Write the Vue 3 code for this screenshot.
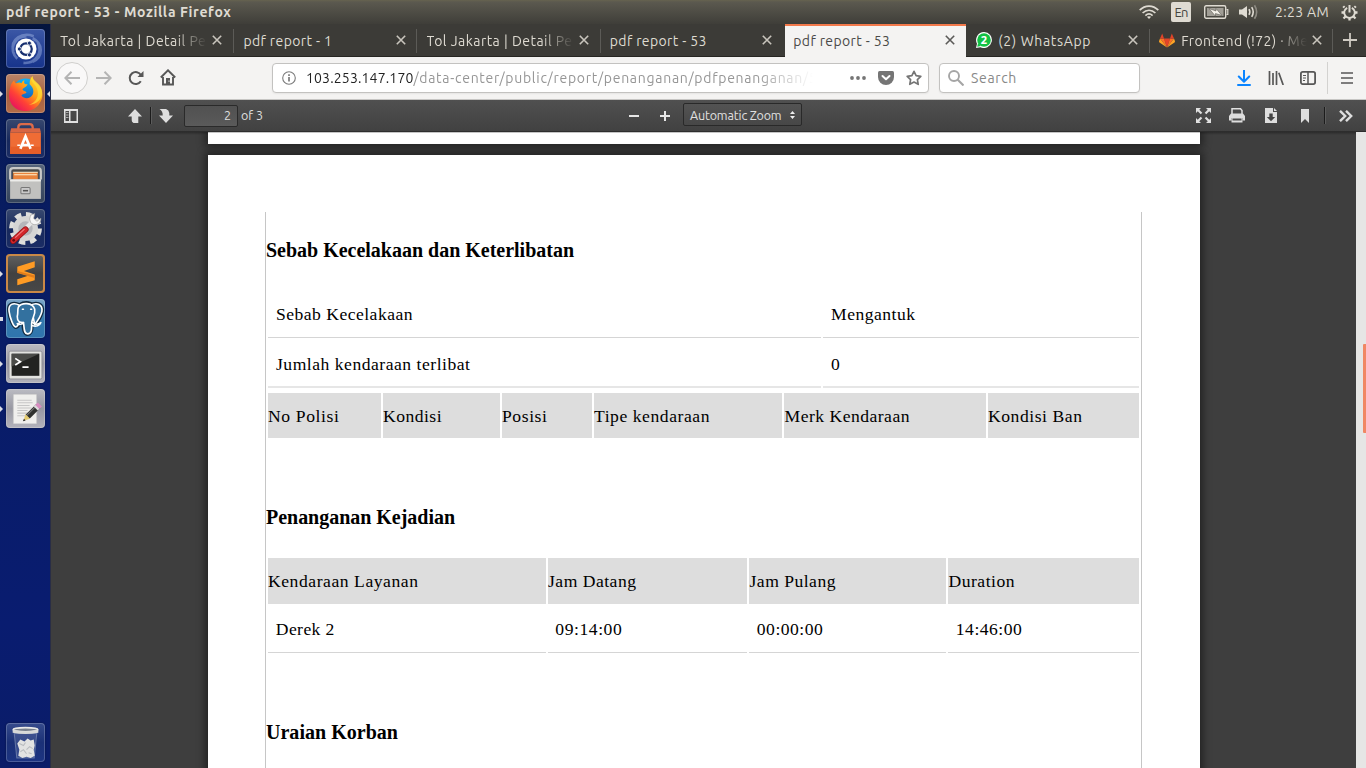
<script setup>
const vFit = {
  mounted(el, { value }) {
    const natural = el.getBoundingClientRect().width
    el.style.letterSpacing = (value - natural) / el.textContent.length + 'px'
  },
}

const tabs = [
  { title: 'Tol Jakarta | Detail Pe', width: 146, fade: true },
  { title: 'pdf report - 1', width: 89 },
  { title: 'Tol Jakarta | Detail Pe', width: 146, fade: true },
  { title: 'pdf report - 53', width: 97 },
  { title: 'pdf report - 53', width: 97, active: true },
  { title: '(2) WhatsApp', width: 93, icon: 'whatsapp' },
  { title: 'Frontend (!72) · Me', width: 127, icon: 'gitlab', fade: true },
]

const causes = [
  [{ t: 'Sebab Kecelakaan', w: 137 }, { t: 'Mengantuk', w: 84.5 }],
  [{ t: 'Jumlah kendaraan terlibat', w: 194.5 }, { t: '0', w: 9 }],
]
const vehicleHead = [
  { t: 'No Polisi', w: 71.5 },
  { t: 'Kondisi', w: 59 },
  { t: 'Posisi', w: 45.5 },
  { t: 'Tipe kendaraan', w: 116 },
  { t: 'Merk Kendaraan', w: 125.5 },
  { t: 'Kondisi Ban', w: 94.5 },
]
const handlingHead = [
  { t: 'Kendaraan Layanan', w: 150.5 },
  { t: 'Jam Datang', w: 88.5 },
  { t: 'Jam Pulang', w: 86.5 },
  { t: 'Duration', w: 66.5 },
]
const handlingRow = [
  { t: 'Derek 2', w: 59 },
  { t: '09:14:00', w: 67 },
  { t: '00:00:00', w: 66.5 },
  { t: '14:46:00', w: 66.5 },
]
</script>

<template>
  <div class="screen">
    <header class="menubar">
      <span v-fit="225.500" class="win-title">pdf report - 53 - Mozilla Firefox</span>
      <div class="indicators">
        <svg class="wifi" width="20" height="14" viewBox="0 0 20 14" fill="none" stroke="#dfdbd2" stroke-width="1.7">
          <path d="M.7 5.2C6-.2 14-.2 19.3 5.2M3.6 8C7.4 4.300 12.600 4.300 16.400 8M6.400 10.600c2.200-2 5-2 7.200 0" />
          <path d="M7.900 11.800 10 14l2.100-2.200Q10 10.500 7.900 11.800z" fill="#dfdbd2" stroke="none" />
        </svg>
        <span class="lang"><span v-fit="13">En</span></span>
        <svg class="battery" width="25" height="14" viewBox="0 0 25 14">
          <rect x=".7" y=".7" width="21" height="12.600" rx="1.500" fill="none" stroke="#dfdbd2" stroke-width="1.400" />
          <path d="M22.500 4.500h1.300v5h-1.300" fill="none" stroke="#dfdbd2" stroke-width="1.200" />
          <rect x="3" y="3" width="16.500" height="8" fill="#a19e96" />
          <path d="m5 3.500 7 2.500V3.500l6 7-6.500-2v2.700z" fill="#f3f0e8" stroke="#4a4943" stroke-width=".5" />
        </svg>
        <svg class="volume" width="20" height="16" viewBox="0 0 20 16" fill="none" stroke="#dfdbd2" stroke-width="1.600">
          <path d="M0 5.500h3L8 2v12l-5-3.500H0z" fill="#dfdbd2" stroke="none" />
          <path d="M10 5.200q1.700 2.800 0 5.600M12.700 3.200q3 4.800 0 9.600" />
          <path d="M15.500 1.300q4.300 6.700 0 13.400" stroke="#8d8a82" />
        </svg>
        <span v-fit="54" class="clock">2:23 AM</span>
        <svg class="cog" width="17" height="17" viewBox="-8.500 -8.500 17 17" fill="none" stroke="#dfdbd2">
          <path d="M-2.300-4.700A5.300 5.300 0 1 0 2.300-4.700" stroke-width="1.900" />
          <path d="M0-7.500V0" stroke-width="2" />
          <path d="M5-5l1.300-1.300M-5-5l-1.300-1.300M5.500 0H8M-5.500 0H-8M4 4l2 2M-4 4l-2 2M0 5.500V8" stroke-width="2.300" />
        </svg>
      </div>
    </header>

    <div class="desktop">
      <nav class="launcher">
        <div class="tile dash">
          <svg viewBox="0 0 38 38">
            <g fill="none" stroke="#b5c7ef" stroke-opacity=".4" stroke-width="2.500">
              <path d="M7 22C4 9 16 3 27 7M31 13c5 10-2 21-14 20M11 29C2 20 8 7 20 7M26 9c10 5 11 18 0 23" />
            </g>
            <circle cx="19.500" cy="19.500" r="10.200" fill="#fff" />
            <circle cx="19.500" cy="19.500" r="5.600" fill="none" stroke="#183070" stroke-width="2.200" />
            <g fill="#183070" stroke="#fff" stroke-width=".8">
              <circle cx="13" cy="19.500" r="2" /><circle cx="22.800" cy="13.800" r="2" /><circle cx="22.800" cy="25.200" r="2" />
            </g>
          </svg>
        </div>
        <div class="tile firefox">
          <i class="run" /><i class="focus" />
          <svg viewBox="0 0 38 38">
            <defs>
              <linearGradient id="fx" x1=".85" y1=".1" x2=".15" y2=".9"><stop offset="0" stop-color="#ffe12e" /><stop offset=".4" stop-color="#ff9a14" /><stop offset=".7" stop-color="#ff4236" /><stop offset="1" stop-color="#e9155c" /></linearGradient>
              <linearGradient id="globe" x2="0" y2="1"><stop offset="0" stop-color="#12b2f5" /><stop offset="1" stop-color="#174daf" /></linearGradient>
            </defs>
            <circle cx="19" cy="17" r="12.500" fill="url(#globe)" />
            <path d="M5 10c1-2 2-3 3-4 0 2 1 3 2 3 2-1 4-1 5 0 1-2 2-3 3-3-1 3 0 4 3 4-1 3-4 3-5 5 1 2 3 1 4 3-2 2-4 1-5 3 3 4 9 3 11-1 2-5-1-8-3-10 0-4 1-6 3-8 0 4 3 6 6 9 5 6 4 13 1 17-4 7-10 8-15 8C9 36 3 29 3 21c0-4 1-8 2-11z" fill="url(#fx)" />
            <path d="M24 3c0 6 6 7 7 14 1 7-4 12-9 13 8 0 14-6 13-14C34 10 28 7 24 3z" fill="#ffdb38" fill-opacity=".7" />
          </svg>
        </div>
        <div class="tile plain">
          <svg viewBox="0 0 38 38">
            <path d="M12 12V8q0-3 3-3h8q3 0 3 3v4" fill="none" stroke="#dd6b49" stroke-width="2.300" />
            <path d="M5 9h28l1 4H4z" fill="#d86543" />
            <path d="M4 13h30v21H4z" fill="#ef6c35" /><path d="M4 27h30v7H4z" fill="#e65e28" />
            <path d="m14 29 5-12 5 12M14.500 25.500h9" fill="none" stroke="#fff" stroke-width="2.600" />
            <path d="M11 25.500h3m10 0h3" stroke="#fff" stroke-width="1.500" />
          </svg>
        </div>
        <div class="tile slate">
          <svg viewBox="0 0 38 38">
            <path d="M6 5h26v12H6z" fill="#4d4b48" /><path d="M7 8h24v8H7z" fill="#e9843d" /><path d="M7 8h24M8 10.500h22" stroke="#fff0cf" stroke-width="1" />
            <path d="M4 15V7q0-3 3-3h24q3 0 3 3v8" fill="none" stroke="#c9c9c7" stroke-width="2" />
            <path d="M4 15h30v19H4z" fill="#c1c1bf" /><path d="M4 15h30v2H4z" fill="#ececea" />
            <rect x="14.500" y="23" width="9" height="6" rx="1" fill="#c9c9c9" stroke="#777" /><path d="M16.500 26h5" stroke="#555" stroke-width="1.500" />
          </svg>
        </div>
        <div class="tile plain">
          <svg viewBox="0 0 38 38">
            <circle cx="19" cy="19" r="13.500" fill="none" stroke="#dededc" stroke-width="5" stroke-dasharray="6.100 4.503" />
            <circle cx="19" cy="19" r="12.200" fill="#d5d5d4" /><circle cx="19" cy="19" r="7" fill="#b5b6ba" />
            <path d="m17 21 9-9" stroke="#e6e6e6" stroke-width="4" />
            <path d="M24 6q-2 4 0 7t6 2q4-1 4-6l-4 3-3-3 1-4.500z" fill="#f6f6f6" stroke="#999" stroke-width=".6" />
            <path d="M7 31 19 20" stroke="#8d1115" stroke-width="6" stroke-linecap="round" /><path d="M7 31 19 20" stroke="#d3262a" stroke-width="4.600" stroke-linecap="round" />
            <path d="m9 28 9-8.500" stroke="#f18483" stroke-width="1" /><circle cx="7.500" cy="30.500" r="1.300" fill="#64090c" />
          </svg>
        </div>
        <div class="tile sublime">
          <i class="run" />
          <svg viewBox="0 0 38 38">
            <path d="M11 14.500 28 9v6l-10.500 3.500L28 22v5.500L11 32.500v-6l10.500-3.300L11 20z" fill="#ff9b24" transform="translate(0 -2)" />
            <path d="m11 18.500 17 4.500v2.500l-17-5z" fill="#e07d1b" transform="translate(0 -2)" />
          </svg>
        </div>
        <div class="tile postgres">
          <i class="run dot" />
          <svg viewBox="0 0 38 38" stroke-linejoin="round" stroke-linecap="round">
            <g stroke="#122b40" stroke-width="4" fill="none"><path d="M13 6C7 3 2 5 3 12c1 7 4 14 6 15 3 1 4-4 5-6" /><path d="M24 6c6-3 12-1 11 6-1 5-4 9-6 12" /><path d="M13 6c7-4 15-2 16 6 0 6-4 10-4 14s-1 8-4 8-4-5-4-11" /></g>
            <g fill="#33719f" stroke="#fff" stroke-width="1.600">
              <path d="M13 6C7 3 2 5 3 12c1 7 4 14 6 15 2 1 4-4 5-6z" /><path d="M24 6c6-3 12-1 11 6-1 5-4 9-7 13z" />
              <path d="M12 8c3-5 14-5 16 2 1 6-3 9-3 14 0 6 0 10-4 10s-3-6-4-11c-5 0-6-2-6-6 1-4 0-6 1-9z" />
              <path d="M26 23c2 2 5 2 8 0-1 3-5 4-8 3M17 23c-1 2-5 2-6 1" fill="none" />
            </g>
            <path d="M16 10h1M24 10h1" stroke="#fff" stroke-width="1.500" />
          </svg>
        </div>
        <div class="tile grey">
          <i class="run" />
          <svg viewBox="0 0 38 38">
            <rect x="3" y="7" width="32" height="27" rx="1.500" fill="#e3e3e0" stroke="#85868b" stroke-width=".7" />
            <rect x="5.500" y="9.500" width="27" height="21.500" fill="#222321" /><path d="M5.500 9.500h27L5.500 22z" fill="#4a4b48" />
            <path d="m9 14 5 3.200-5 3.200M16 22.500h6" fill="none" stroke="#fff" stroke-width="1.700" />
          </svg>
        </div>
        <div class="tile grey">
          <i class="run" />
          <svg viewBox="0 0 38 38">
            <path d="M7 5h23v29H7z" fill="#f0efed" stroke="#b4b4b7" stroke-width=".6" />
            <path d="M11 11h14M11 13.500h15M11 16h12M11 18.500h14M11 21h10M11 23.500h11M11 26h8" stroke="#c6c6c6" stroke-width="1" />
            <path d="m21 27 10.500-10.500" stroke="#30312f" stroke-width="5.500" /><path d="m20 26 10.500-10.500" stroke="#777" stroke-width="1" />
            <path d="m30 18 3-3" stroke="#d98dc0" stroke-width="5.500" /><path d="m29 19 1.500-1.500" stroke="#ddd" stroke-width="5.500" />
            <path d="m17 31 2-6.500 4.500 4.500z" fill="#e4cb70" /><path d="m16.500 31.500 1-2.500 1.600 1.600z" fill="#222" />
          </svg>
        </div>
        <div class="tile trash">
          <svg viewBox="0 0 38 38">
            <path d="M8 10h22l-2.500 24h-17z" fill="#7483b2" fill-opacity=".3" stroke="#9eabc8" stroke-opacity=".5" />
            <path d="m11 20 3-4 4 2 3-3 3 2 3-1 1 6-1 4 1 6-4 2-4-1-4 1-4-2 1-6z" fill="#e2e3e2" />
            <path d="m13 20 4 2 2-3M20 26l3-3 3 2M14 28l3-2 3 4M22 29l3 1" fill="none" stroke="#b9bcbf" stroke-width="1" />
            <ellipse cx="19" cy="6.500" rx="12" ry="2" fill="#777f8c" stroke="#e8e9e8" stroke-width="1.600" />
            <path d="M6.500 6.500v3q12.500 2.500 25 0v-3q-12.500 3-25 0z" fill="#d7d9d8" />
          </svg>
        </div>
      </nav>

      <main class="browser">
        <div class="tabs">
          <div v-for="(tab, i) in tabs" :key="i" class="tab" :class="{ active: tab.active, nosep: i === 3 || i === 4 }">
            <svg v-if="tab.icon === 'whatsapp'" class="fav" width="16" height="16" viewBox="0 0 16 16">
              <path d="M8 0a8 8 0 1 1-3.600 15.200L0 16l1-4.200A8 8 0 0 1 8 0z" fill="#fff" /><circle cx="8" cy="8" r="6.800" fill="#12c143" /><path d="m1.200 14.800.9-3.500 2.800 2.600z" fill="#12c143" />
              <text x="8" y="12" text-anchor="middle" class="badge">2</text>
            </svg>
            <svg v-if="tab.icon === 'gitlab'" class="fav" width="16" height="15" viewBox="0 0 16 15">
              <path d="m8 14.500 3-9H5z" fill="#e24329" /><path d="M8 14.500 5 5.500H1z" fill="#fc6d26" /><path d="m8 14.500 3-9h4z" fill="#fc6d26" />
              <path d="M1 5.500 0 8.300q0 .8.500 1.200L8 14.500zM15 5.500l1 2.800q0 .8-.5 1.200L8 14.500z" fill="#fca326" /><path d="M1 5.500h4L3.200.5zM15 5.500h-4l1.800-5z" fill="#e24329" />
            </svg>
            <div class="tab-label" :class="{ fade: tab.fade }"><span v-fit="tab.width">{{ tab.title }}</span></div>
            <svg class="close" width="10" height="10" viewBox="0 0 10 10"><path d="m.8.8 8.400 8.400m0-8.400L.8 9.200" stroke="currentColor" stroke-width="1.600" /></svg>
          </div>
          <svg class="newtab" width="14" height="14" viewBox="0 0 14 14"><path d="M7 0v14M0 7h14" stroke="#cfcbc3" stroke-width="1.800" /></svg>
        </div>

        <div class="navbar">
          <button class="nb back"><svg width="16" height="14" viewBox="0 0 16 14"><path d="M16 7H1.500M7.500.8 1.300 7l6.200 6.200" /></svg></button>
          <button class="nb fwd"><svg width="16" height="14" viewBox="0 0 16 14"><path d="M0 7h14.500M8.500.8 14.700 7l-6.200 6.200" /></svg></button>
          <button class="nb"><svg width="16" height="16" viewBox="0 0 16 16"><path d="M12.800 11.300A6 6 0 1 1 13 5.200" stroke-width="2" /><path d="M15.500 1v6h-6z" fill="#575757" stroke="none" /></svg></button>
          <button class="nb"><svg width="16" height="17" viewBox="0 0 16 17"><path d="M.8 8.500 8 1.300l7.200 7.200" stroke-width="1.900" /><path d="M3 8v7.500h10V8" stroke-width="1.900" /><path d="M6 15V9h4v6" fill="#575757" stroke="none" /><path d="M8.500 11.500h1v1.200h-1z" fill="#fff" stroke="none" /></svg></button>

          <div class="urlbar">
            <svg class="info" width="14" height="14" viewBox="0 0 14 14"><circle cx="7" cy="7" r="6.300" fill="none" stroke="#7a7a7a" stroke-width="1.100" /><path d="M7 6v4.500M7 3.200v1.700" stroke="#7a7a7a" stroke-width="1.700" /></svg>
            <div class="url"><span v-fit="107.500" class="host">103.253.147.170</span><span v-fit="404" class="path">/data-center/public/report/penanganan/pdfpenanganan/5</span></div>
            <svg class="dots" width="16" height="4" viewBox="0 0 16 4" fill="#757575"><circle cx="2" cy="2" r="1.900" /><circle cx="8" cy="2" r="1.900" /><circle cx="14" cy="2" r="1.900" /></svg>
            <svg class="pocket" width="16" height="14" viewBox="0 0 16 14"><path d="M1.500 0h13Q16 0 16 1.500V6A8 8 0 0 1 0 6V1.500Q0 0 1.500 0z" fill="#757575" /><path d="M4.500 5 8 8.300 11.500 5" fill="none" stroke="#fff" stroke-width="2" stroke-linecap="round" stroke-linejoin="round" /></svg>
            <svg class="star" width="16" height="16" viewBox="0 0 16 16"><path d="m8 1.300 2.100 4.300 4.700.7-3.400 3.300.8 4.700L8 12.100l-4.200 2.200.8-4.700L1.200 6.300l4.700-.7z" fill="none" stroke="#757575" stroke-width="1.700" stroke-linejoin="round" /></svg>
          </div>

          <div class="search">
            <svg width="16" height="16" viewBox="0 0 16 16"><circle cx="6" cy="6" r="5" fill="none" stroke="#a5a5a5" stroke-width="1.900" /><path d="m9.500 9.500 6 6" stroke="#a5a5a5" stroke-width="2.100" /></svg>
            <span v-fit="46">Search</span>
          </div>

          <button class="nb dl"><svg width="14" height="16" viewBox="0 0 14 16"><path d="M7 0v11.500M1.800 6.500 7 11.700l5.200-5.200M1 15h12" stroke="#0a84ff" stroke-width="2" stroke-linecap="round" stroke-linejoin="round" /></svg></button>
          <button class="nb"><svg width="16" height="14" viewBox="0 0 16 14"><path d="M1.500 0v14M5 2v12M8.500 0v14M10.800 1.800 15.200 14" stroke-width="1.700" /></svg></button>
          <button class="nb"><svg width="16" height="14" viewBox="0 0 16 14"><rect x=".9" y=".9" width="14.200" height="12.200" rx="1.800" stroke-width="1.800" /><path d="M8 1v12" stroke-width="1.500" /><path d="M3 4.500h3M3 7h3M3 9.500h2" stroke-width="1" /></svg></button>
          <i class="nav-sep" />
          <button class="nb menu"><svg width="12" height="12" viewBox="0 0 12 12"><path d="M0 1h12M0 6h12M0 11h12" stroke-width="1.700" /></svg></button>
        </div>

        <div class="pdfbar">
          <div class="pdf-left">
            <svg class="side" width="14" height="14" viewBox="0 0 14 14"><path fill-rule="evenodd" d="M0 0h14v14H0zM1.500 2v10H5V2zm5 0v10h6V2z" fill="#e0e0e0" /><path d="M2 3.500h2.500M2 6h2.500M2 8.500h2.500" stroke="#aaa" /></svg>
            <svg class="up" width="14" height="14" viewBox="0 0 14 14"><path d="m7 0 7 7.500h-3.700V14H5.500q-2-1-1.800-3V7.500H0z" fill="#dedede" /></svg>
            <i class="sep" />
            <svg class="down" width="14" height="14" viewBox="0 0 14 14"><path d="M7 14 0 6.500h3.700Q4 2 .5 0H7q3 1 3.300 4v2.500H14z" fill="#dedede" /></svg>
            <div class="pageno"><span>2</span></div>
            <span v-fit="22" class="of">of 3</span>
          </div>
          <div class="pdf-mid">
            <svg width="10" height="10" viewBox="0 0 10 10"><path d="M0 5h10" stroke="#e6e6e6" stroke-width="2" /></svg>
            <i class="sep" />
            <svg width="10" height="10" viewBox="0 0 10 10"><path d="M0 5h10M5 0v10" stroke="#e6e6e6" stroke-width="2" /></svg>
            <div class="zoom"><span v-fit="91.500">Automatic Zoom</span><svg width="5" height="8" viewBox="0 0 5 8"><path d="M2.500 0 5 3H0zM0 5h5L2.500 8z" fill="#eee" /></svg></div>
          </div>
          <div class="pdf-right">
            <div class="tool"><svg width="15" height="15" viewBox="0 0 15 15" fill="#e0e0e0" stroke="#e0e0e0"><path d="M1.500 1.500 5.500 5.500M13.500 1.500 9.500 5.500M1.500 13.500 5.500 9.500M13.500 13.500 9.500 9.500" stroke-width="2.200" /><path d="M0 0h5L0 5zM15 0v5l-5-5zM0 15v-5l5 5zM15 15h-5l5-5z" stroke="none" /></svg></div>
            <div class="tool"><svg width="16" height="15" viewBox="0 0 16 15"><path d="M3 6V.8h8.500L13 2.500V6" fill="none" stroke="#e0e0e0" stroke-width="1.500" /><path d="M2 5.500h12l2 2.500v4.500h-2.500V10h-11v2.500H0V8z" fill="#dedede" /><path d="M2.500 10h11v4.500h-11z" fill="#dedede" /><path d="M3.500 10.500h9v2h-9z" fill="#4b4b4b" /></svg></div>
            <div class="tool"><svg width="12" height="15" viewBox="0 0 12 15"><path d="M0 0h8v4h4v11H0z" fill="#dedede" /><path d="m9 0 3 3H9z" fill="#dedede" /><path d="M4.300 5.500h3.400V9h2.500L6 13.200 1.800 9h2.500z" fill="#444" /></svg></div>
            <div class="tool"><svg width="8" height="14" viewBox="0 0 8 14"><path d="M0 0h8v14l-4-4-4 4z" fill="#dedede" /></svg></div>
            <i class="sep" />
            <svg class="more" width="14" height="12" viewBox="0 0 14 12"><path d="m1 .8 5.200 5.200L1 11.200M7 .8 12.200 6 7 11.200" fill="none" stroke="#dedede" stroke-width="2.400" /></svg>
          </div>
        </div>

        <div class="viewer">
          <div class="pages">
            <div class="page first" />
            <article class="page second">
              <div class="report">
                <h2><span v-fit="308">Sebab Kecelakaan dan Keterlibatan</span></h2>
                <div class="grid causes">
                  <template v-for="(row, r) in causes" :key="r">
                    <div v-for="c in row" :key="c.t" class="cell"><span v-fit="c.w">{{ c.t }}</span></div>
                  </template>
                </div>
                <div class="grid vehicles">
                  <div v-for="c in vehicleHead" :key="c.t" class="head"><span v-fit="c.w">{{ c.t }}</span></div>
                </div>
                <h2><span v-fit="189">Penanganan Kejadian</span></h2>
                <div class="grid handling">
                  <div v-for="c in handlingHead" :key="c.t" class="head"><span v-fit="c.w">{{ c.t }}</span></div>
                  <div v-for="c in handlingRow" :key="c.t" class="cell"><span v-fit="c.w">{{ c.t }}</span></div>
                </div>
                <h2><span v-fit="132">Uraian Korban</span></h2>
              </div>
            </article>
          </div>
          <div class="scroll"><i /></div>
        </div>
      </main>
    </div>
  </div>
</template>

<style>
html, body { margin: 0; overflow: hidden; }
</style>

<style scoped>
* { box-sizing: border-box; }
svg { display: block; flex: none; }
span { white-space: nowrap; }
.screen { width: 1366px; height: 768px; overflow: hidden; display: flex; flex-direction: column; font: 14px/20px Ubuntu, "Noto Sans", sans-serif; }
.menubar { height: 24px; flex: none; display: flex; align-items: center; justify-content: space-between; padding: 0 8px 0 6px; background: linear-gradient(#66634f 0, #5b594f 2px, #3f3e39); color: #dfdbd2; }
.win-title { font-weight: 700; font-size: 14px; }
.indicators { display: flex; align-items: center; }
.lang { width: 20px; height: 20px; margin: 0 13px 0 12px; border-radius: 2px; background: #dfdbd2; color: #45443f; font-size: 13px; display: flex; justify-content: center; }
.volume { margin: 0 16px 0 10px; }
.clock { margin-right: 12px; }

.desktop { flex: 1; min-height: 0; display: flex; }
.launcher { width: 51px; flex: none; display: flex; flex-direction: column; gap: 6px; padding: 5px 6px 6px 5.500px; border-right: 1px solid #292d45; background: linear-gradient(#04143d, #071b54 60px, #081c62 200px, #091c70 600px, #0a1c68); }
.tile { position: relative; width: 39px; height: 39px; flex: none; border-radius: 4px; box-shadow: inset 0 0 0 1px rgba(255,255,255,.2), 0 0 2px rgba(0,0,0,.4); background: linear-gradient(#38496f, #17295d 55%, #1b2d65); }
.tile svg { width: 39px; height: 39px; }
.dash { background: linear-gradient(#3c58a6, #274397 50%, #17348c); }
.firefox { background: linear-gradient(#b98468, #a66040 55%, #b36d48); }
.slate { background: linear-gradient(#56657b, #34435b); }
.sublime { background: linear-gradient(#626262, #414141 50%, #484848); box-shadow: inset 0 0 0 2px #c98847; }
.postgres { background: linear-gradient(#7fa8ca, #3579ad 50%, #2f75ad); }
.grey { background: linear-gradient(#bbbbc2, #9898a2 50%, #b2b2bb); }
.trash { margin-top: auto; background: linear-gradient(#364b8c, #1b3177 50%, #1c3482); }
.run, .focus { position: absolute; top: 17px; border: 3px solid transparent; }
.run { left: -5.500px; border-left-color: #d8dbe4; border-right: 0; }
.focus { right: -5.500px; border-right-color: #d8dbe4; border-left: 0; }
.run.dot { border: 0; top: 18px; width: 3px; height: 4px; background: #d8dbe4; }

.browser { flex: 1; min-width: 0; display: flex; flex-direction: column; }
.tabs { height: 33px; flex: none; display: flex; background: #3c3b37; border-bottom: 1px solid #272622; color: #dfdbd2; }
.tab { width: 183.200px; flex: none; display: flex; align-items: center; padding: 0 11.800px 0 9.200px; position: relative; }
.tab::after { content: ""; position: absolute; right: 0; top: 5px; height: 24px; width: 1px; background: #5c5b57; }
.tab.nosep::after { display: none; }
.tab.active { height: 33px; margin: 0 1px; width: 181.200px; padding: 0 11px 3px 8.500px; background: #f4f3f2; border-top: 2px solid #f2794b; color: #4b4a48; }
.tab.active .close { color: #5b5a58; }
.tab-label { flex: 1; min-width: 0; margin-right: 5px; padding-top: 1px; line-height: 20px; }
.tab-label.fade { margin-right: 2px; mask-image: linear-gradient(90deg, #000 calc(100% - 36px), transparent calc(100% - 3px)); }
.fav { margin-right: 6px; }
.badge { font: 700 11px "Noto Sans", sans-serif; fill: #fff; }
.close { color: #c9c5bd; }
.newtab { margin: 9px 0 0 10px; }

.navbar { height: 43px; flex: none; display: flex; align-items: center; padding: 0 3px 1px 5px; background: #f4f3f2; border-bottom: 1px solid #c7c6c4; }
.nb { width: 32px; height: 32px; flex: none; padding: 0; border: 0; background: none; display: grid; place-items: center; }
.nb svg { fill: none; stroke: #575757; stroke-width: 2; }
.back { border: 1px solid #d0cfcd; border-radius: 50%; background: #f9f8f8; }
.back svg, .fwd svg { stroke: #b4b4b4; }
.urlbar, .search { height: 30px; border: 1px solid #c3c2c0; border-radius: 4px; background: #fff; display: flex; align-items: center; box-shadow: 0 1px 2px rgba(0,0,0,.06); }
.urlbar { width: 657px; margin: 0 10px 0 88px; padding: 0 6px 0 9px; }
.url { width: 514px; margin-left: 10px; padding-top: 1px; display: flex; mask-image: linear-gradient(90deg, #000 450px, transparent 507px); }
.host { color: #222; }
.path { color: #969696; }
.dots { margin-left: 30px; }
.pocket { margin-left: 12px; }
.star { margin-left: 12px; }
.search { width: 201px; margin-right: 88px; padding-left: 8px; gap: 7px; color: #888; }
.search span { padding-top: 1px; }
.nav-sep { width: 1px; height: 32px; margin: 0 3px; background: #d3d2d0; }

.pdfbar { height: 32px; flex: none; display: flex; justify-content: space-between; background: linear-gradient(#505050, #414141); border-bottom: 1px solid #2d2d2d; color: #e0e0e0; font-size: 12.500px; }
.pdf-left, .pdf-mid, .pdf-right { display: flex; align-items: center; }
.pdf-left { padding-left: 13px; width: 320px; }
.up { margin: 0 8px 0 50px; }
.sep { width: 2px; height: 17px; background: linear-gradient(90deg, #1c1c1c 50%, #5c5c5c 50%); }
.down { margin-left: 7px; }
.pageno { width: 54px; height: 22px; margin: 0 3px 0 11px; padding-right: 6px; border: 1px solid #2a2a2a; border-radius: 2px; background: linear-gradient(#515151, #5a5a5a); text-align: right; line-height: 18px; }
.of { padding-bottom: 1px; }
.pdf-mid { width: 168px; margin-left: 258px; margin-right: auto; }
.pdf-mid .sep { margin: 0 10px 0 11px; }
.zoom { width: 119px; flex: none; height: 23px; margin: -2px 0 0 13px; padding: 1px 6px 0 6px; border: 1px solid #292929; border-radius: 2px; background: linear-gradient(#535353, #474747); display: flex; align-items: center; justify-content: space-between; }
.pdf-right { padding-right: 13px; }
.tool { width: 34px; display: flex; justify-content: center; }
.pdf-right .sep { margin: 0 13px 0 2px; }

.viewer { flex: 1; min-height: 0; display: flex; background: #3e3e3e; }
.pages { flex: 1; padding-left: 157px; overflow: hidden; background: linear-gradient(rgba(0,0,0,.3), transparent 3px); }
.page { width: 992px; background: #fff; box-shadow: 0 0 8px 3px rgba(0,0,0,.45); }
.first { height: 12px; margin-bottom: 11px; background: linear-gradient(#c5c5c5 1px, #fff 1px); }
.second { height: 700px; padding: 57px 58px 0 57px; }
.report { height: 643px; border: solid #c6c6c6; border-width: 0 1px; font: 17.600px/24px "Liberation Serif", "Times New Roman", serif; color: #000; overflow: hidden; }
h2 { font-size: 20px; line-height: 24px; margin: 26px 0 0; }
.grid { display: grid; column-gap: 2px; row-gap: 2px; margin-left: 2px; width: 870.500px; }
.causes { grid-template-columns: 553px 1fr; margin-top: 28px; grid-auto-rows: 48px; }
.cell { border-bottom: 1px solid #d5d5d5; padding: 12px 0 0 8px; }
.causes .cell:nth-child(n+3) { border-bottom: 2px solid #e6e6e6; }
.head { background: #ddd; padding-top: 11px; height: 45px; }
.head:not(:first-child) { padding-left: .5px; }
.vehicles { grid-template-columns: 112.500px 117px 90px 188.500px 201.500px 1fr; margin-top: 5px; }
.vehicles + h2 { margin-top: 67px; }
.handling { grid-template-columns: 277.500px 199.500px 197px 1fr; margin-top: 29px; grid-template-rows: 46px 47px; }
.handling .head { height: 46px; }
.handling .cell { padding-left: 7.800px; padding-top: 11px; height: 47px; }
.handling + h2 { margin-top: 67px; }
.scroll { width: 10px; flex: none; background: #e6e6e5; padding-top: 212px; display: flex; justify-content: flex-end; }
.scroll i { width: 3px; height: 89px; border-radius: 1px 0 0 1px; background: #f08763; }
</style>
